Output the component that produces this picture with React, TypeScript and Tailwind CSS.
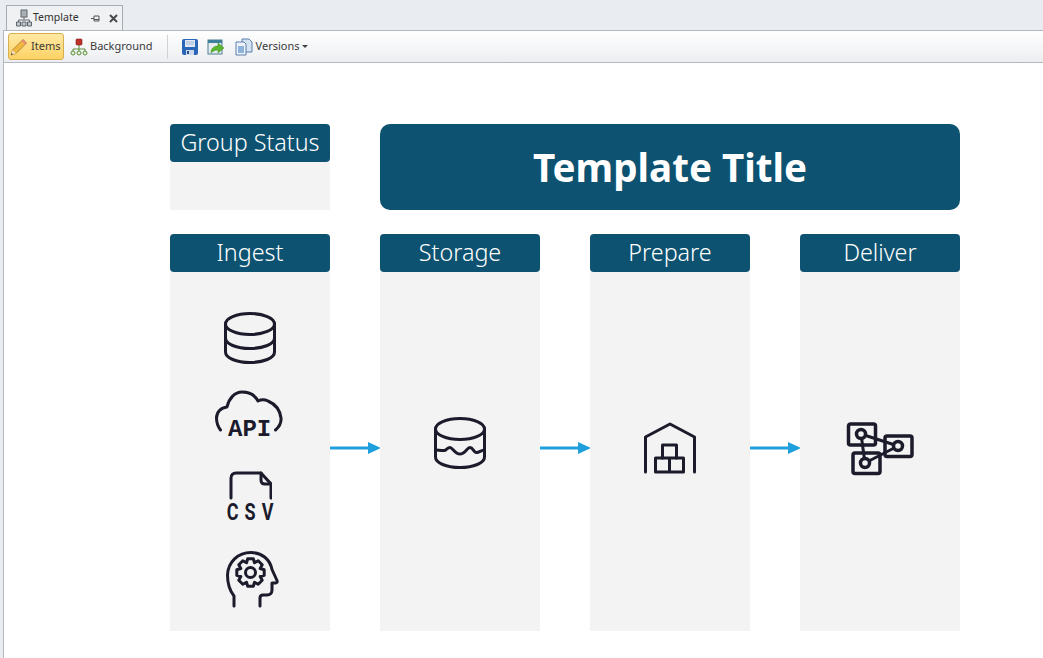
const ui = "font-['Noto_Sans','Open_Sans',sans-serif]";
const mono = "font-['Liberation_Mono',monospace]";

const Stroke = ({ w, h, children }: { w: number; h: number; children: React.ReactNode }) => (
  <svg width={w} height={h} viewBox={`0 0 ${w} ${h}`} fill="none" stroke="#1b1b2b" strokeWidth="3" strokeLinecap="round" strokeLinejoin="round" className="shrink-0">
    {children}
  </svg>
);

const DbIcon = () => (
  <Stroke w={54} h={54}>
    <ellipse cx="27" cy="13" rx="24.5" ry="10.5" />
    <path d="M2.5 13v28c0 6 11 10.5 24.500 10.500S51.500 47 51.500 41V13" />
    <path d="M2.500 27c0 6 11 10.500 24.500 10.500S51.500 33 51.500 27" />
  </Stroke>
);

const ApiIcon = () => (
  <div className="relative w-[70px] h-[50px] mt-[25px]">
    <Stroke w={70} h={50}>
      <path d="M5.500 40C2.500 36 1.500 32 1.500 28 1.500 22 6 17.500 12 17 14 8 20 2 27 2c7 0 13 3 16 9 3-1.500 7-1.500 10 0 7 3 12 9 13 17 .5 5-2 9-5.500 12" />
    </Stroke>
    <span className={`absolute left-[13px] top-[28px] text-[24px] leading-[24px] font-bold text-[#1b1b2b] ${mono}`}>API</span>
  </div>
);

const CsvIcon = () => (
  <div className="flex flex-col items-center mt-[30px]">
    <Stroke w={44} h={30}>
      <path d="M3 28V8c0-3 2-5 5-5h25l10 11v14" />
      <path d="M33 3v7c0 3 2 4 4 4h6" />
    </Stroke>
    <span className="font-['Roboto',sans-serif] font-bold text-[24px] leading-[24px] tracking-[8px] pl-[8px] scale-x-[0.75] text-[#1b1b2b]">CSV</span>
  </div>
);

// gear outline, 8 teeth
const gear = (cx: number, cy: number, outer: number, inner: number) => {
  const pts: string[] = [];
  for (let i = 0; i < 8; i++) {
    const a = (i * Math.PI) / 4 - Math.PI / 2;
    [[-0.39, inner], [-0.2, outer], [0.2, outer], [0.39, inner]].forEach(([d, r]) => {
      pts.push(`${(cx + Math.cos(a + d) * r).toFixed(1)} ${(cy + Math.sin(a + d) * r).toFixed(1)}`);
    });
  }
  return `M${pts.join("L")}Z`;
};

const HeadIcon = () => (
  <div className="mt-[27px] pl-[6px]">
    <Stroke w={54} h={58}>
      <path d="M8 55V45C4 40 1.500 34 1.500 24 2 11 12 1.500 25 1.500c11 0 19 7 21 17l5 11c.5 1.500 0 2.500-1.500 2.500H46v7c0 3-2 5-5 5h-4c-2 0-3 1-3 3v8" />
      <circle cx="24.500" cy="21.500" r="5" />
      <path d={gear(24.5, 21.5, 14, 10.5)} />
    </Stroke>
  </div>
);

const LakeIcon = () => (
  <div className="pb-[12px]">
    <Stroke w={54} h={54}>
      <ellipse cx="27" cy="13" rx="24.500" ry="10.500" />
      <path d="M2.500 13v28c0 6 11 10.500 24.500 10.500S51.500 47 51.500 41V13" />
      <path d="M2.500 34c3 0 6 1 9 .5 2-.5 3-3 5.500-3s5 6.500 10 6.500 7-6.500 10-6.500 3.500 4.500 6 5c3 .5 5-2.500 8.500-2.500" />
    </Stroke>
  </div>
);

const WarehouseIcon = () => (
  <Stroke w={54} h={54}>
    <path d="M2.500 50V15L27 2l24.500 13v35" />
    <path d="M12.500 50V36h28v14zM26.500 36v14" />
    <path d="M19.500 36V23h14v13" />
  </Stroke>
);

const FlowIcon = () => (
  <svg width={68} height={54} viewBox="0 0 68 54" fill="none" stroke="#1b1b2b" strokeWidth="3.500" strokeLinecap="round" strokeLinejoin="round" className="shrink-0">
    <rect x="2.500" y="2" width="27" height="21" rx="2" />
    <rect x="7" y="31" width="27" height="20.500" rx="2" />
    <rect x="39" y="14" width="27" height="20.500" rx="2" />
    <path d="M15 12l37 12M15 12l4 29M19 41l33-17" strokeWidth="3" />
    <circle cx="15" cy="12" r="4.500" fill="#f3f3f4" />
    <circle cx="19" cy="41" r="4.500" fill="#f3f3f4" />
    <circle cx="52" cy="24" r="4.500" fill="#f3f3f4" />
  </svg>
);

const Arrow = () => (
  <div className="w-[50px] shrink-0 flex items-center mt-[30px]">
    <svg width={51} height={14} viewBox="0 0 51 14" className="shrink-0">
      <path d="M0 7h40" stroke="#1f9fdb" strokeWidth="3" />
      <path d="M38 1l13 6-13 6z" fill="#1f9fdb" />
    </svg>
  </div>
);

const Head = ({ label }: { label: string }) => (
  <div className={`h-[38px] bg-[#0d5270] rounded-[4px] text-white text-[23.300px] font-light leading-[37px] text-center ${ui}`}>{label}</div>
);

const Column = ({ label, children, spread }: { label: string; children: React.ReactNode; spread?: boolean }) => (
  <div className="w-[160px] shrink-0 h-[397px] bg-[#f3f3f4] flex flex-col">
    <Head label={label} />
    <div className={`flex-1 flex flex-col items-center ${spread ? "pt-[39px]" : "justify-center pb-[6px]"}`}>{children}</div>
  </div>
);

const Disk = () => (
  <svg width={18} height={18} viewBox="0 0 18 18">
    <rect x="1" y="1" width="16" height="16" rx="2" fill="#2a66b8" />
    <rect x="4" y="2" width="10" height="7" fill="#dfe8f4" />
    <path d="M5 4h8M5 6h8" stroke="#9db6d6" />
    <rect x="5" y="12" width="8" height="5" fill="#cdd8e8" />
    <rect x="6" y="13" width="2" height="3" fill="#2a4f85" />
  </svg>
);

const Export = () => (
  <svg width={18} height={18} viewBox="0 0 18 18">
    <rect x="1" y="2" width="14" height="14" fill="#e6eef2" stroke="#4f7f94" />
    <rect x="1" y="2" width="14" height="3" fill="#3e7f9c" />
    <path d="M4 15c0-5 3-7 7-7V5l6 5-6 5v-3c-3 0-5 1-7 3z" fill="#5cb531" stroke="#3f8c1e" strokeWidth=".5" />
  </svg>
);

const Copies = () => (
  <svg width={18} height={18} viewBox="0 0 18 18">
    <path d="M7 1h7l3 3v10H7z" fill="#d5e2f2" stroke="#5d7fae" />
    <path d="M1 4h8l2 2v11H1z" fill="#eef3fa" stroke="#5d7fae" />
    <path d="M3 8h6v7H3z" fill="#8fb2dd" />
  </svg>
);

const Pencil = () => (
  <svg width={18} height={18} viewBox="0 0 18 18" className="shrink-0">
    <path d="M1 17l1.500-5L13 1.500l3.500 3.500L6 15.500z" fill="#f0b840" stroke="#a8772a" strokeWidth=".8" />
    <path d="M1 17l1.500-5 3.500 3.500z" fill="#f3dcb5" />
    <path d="M1 17l.6-2 1.400 1.400z" fill="#444" />
    <path d="M13 1.500L16.500 5l-1.500 1.500L11.500 3z" fill="#e58a7a" />
  </svg>
);

const TabIcon = () => (
  <svg width={18} height={18} viewBox="0 0 18 18" className="shrink-0">
    <rect x="6" y="1" width="6" height="7" fill="#aab0b6" stroke="#5f666d" />
    <path d="M9 8v3M3.500 13v-2h11v2" stroke="#5f666d" fill="none" />
    <path d="M1.500 13h4v4h-4zM7 13h4v4H7zM12.500 13h4v4h-4z" fill="#c3c8cd" stroke="#5f666d" />
  </svg>
);

const BgIcon = () => (
  <svg width={18} height={18} viewBox="0 0 18 18" fill="none" className="shrink-0">
    <path d="M9 7v4M3 13v-2h12v2M9 11v2" stroke="#5a8f3a" />
    <rect x="6" y="1" width="6" height="6" rx="1" fill="#c0302b" stroke="#7d1f1c" strokeWidth=".6" />
    <circle cx="3" cy="15" r="2" fill="#e8efd9" stroke="#5a8f3a" />
    <circle cx="9" cy="15" r="2" fill="#e8efd9" stroke="#5a8f3a" />
    <circle cx="15" cy="15" r="2" fill="#e8efd9" stroke="#5a8f3a" />
  </svg>
);

const Pin = () => (
  <svg width={9} height={9} viewBox="0 0 9 9" className="shrink-0">
    <path d="M0 4.500h3M3 2h5v5H3zM3 5.500h5" stroke="#555" fill="none" />
  </svg>
);

const Close = () => (
  <svg width={9} height={9} viewBox="0 0 9 9" className="shrink-0">
    <path d="M1 1l7 7M8 1L1 8" stroke="#4a4a4a" strokeWidth="2" />
  </svg>
);

export default function App() {
  return (
    <div className={`w-[1043px] h-[658px] overflow-hidden bg-[#e9ecf0] flex flex-col ${ui}`}>
      <div className="h-[30px] shrink-0 pl-[6px] pt-[5px] flex">
        <div className="w-[117px] h-[25px] bg-[#f0f1f3] border border-b-0 border-[#a9adb3] flex items-center pl-[8px] text-[10.500px] text-[#303030]">
          <TabIcon />
          <span>Template</span>
          <span className="ml-[12px]"><Pin /></span>
          <span className="ml-[9px]"><Close /></span>
        </div>
      </div>
      <div className="h-[33px] shrink-0 ml-[3px] border-y border-l border-[#b4b8bd] bg-gradient-to-b from-white to-[#eceef1] flex items-center pl-[4px] text-[11px] text-[#3a3a3a]">
        <div className="h-[27px] w-[56px] rounded-[3px] border border-[#d9ae4e] bg-gradient-to-b from-[#fee9a3] to-[#fdd262] flex items-center pl-[1px] gap-[3px]">
          <Pencil />
          <span>Items</span>
        </div>
        <div className="flex items-center ml-[6px] gap-[2px]">
          <BgIcon />
          <span>Background</span>
        </div>
        <div className="w-px h-[24px] bg-[#cfd2d6] ml-[14px]" />
        <div className="ml-[13px]"><Disk /></div>
        <div className="ml-[8px]"><Export /></div>
        <div className="ml-[10px]"><Copies /></div>
        <span className="ml-[3px]">Versions</span>
        <span className="ml-[2px] w-0 h-0 border-x-[3px] border-x-transparent border-t-[3px] border-t-[#444]" />
      </div>
      <div className="flex-1 ml-[3px] border-l border-[#b4b8bd] bg-white pl-[166px] pt-[61px]">
        <div className="flex gap-[50px]">
          <div className="w-[160px] h-[86px] bg-[#f3f3f4]">
            <Head label="Group Status" />
          </div>
          <div className={`w-[580px] h-[86px] rounded-[10px] bg-[#0d5270] text-white text-[38.600px] font-bold leading-[86px] text-center ${ui}`}>Template Title</div>
        </div>
        <div className="flex mt-[24px]">
          <Column label="Ingest" spread>
            <DbIcon />
            <ApiIcon />
            <CsvIcon />
            <HeadIcon />
          </Column>
          <Arrow />
          <Column label="Storage"><LakeIcon /></Column>
          <Arrow />
          <Column label="Prepare"><WarehouseIcon /></Column>
          <Arrow />
          <Column label="Deliver"><FlowIcon /></Column>
        </div>
      </div>
    </div>
  );
}
